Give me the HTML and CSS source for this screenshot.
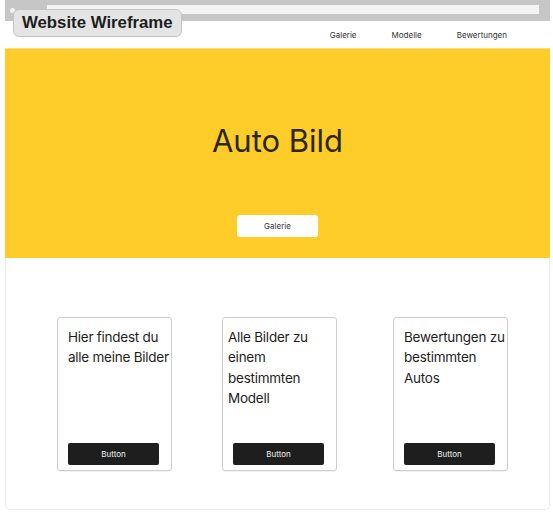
FILE: index.html
```html
<!DOCTYPE html>
<html lang="de">
<head>
<meta charset="utf-8">
<title>Website Wireframe</title>
<link rel="stylesheet" href="styles.css">
</head>
<body>
<div class="frame">
  <div class="chrome">
    <div class="dots"><span class="dot"></span></div>
    <div class="address"></div>
  </div>
  <div class="label">Website Wireframe</div>
  <header class="header">
    <nav class="nav">
      <a class="nav-link">Galerie</a>
      <a class="nav-link">Modelle</a>
      <a class="nav-link">Bewertungen</a>
    </nav>
  </header>
  <section class="hero">
    <h1 class="hero-title">Auto Bild</h1>
    <button class="hero-btn">Galerie</button>
  </section>
  <section class="content">
    <div class="card">
      <p class="card-text">Hier findest du<br>alle meine Bilder</p>
      <button class="card-btn">Button</button>
    </div>
    <div class="card card-mid">
      <p class="card-text card-text-tight">Alle Bilder zu<br>einem<br>bestimmten<br>Modell</p>
      <button class="card-btn">Button</button>
    </div>
    <div class="card card-last">
      <p class="card-text">Bewertungen zu<br>bestimmten<br>Autos</p>
      <button class="card-btn">Button</button>
    </div>
  </section>
</div>
</body>
</html>
```

FILE: styles.css
```css
* { box-sizing: border-box; }
html, body { margin: 0; padding: 0; background: #ffffff; }
body { font-family: Inter, "Noto Sans", sans-serif; color: #1e1e1e; }

.frame {
  position: relative;
  width: 545px;
  margin-left: 5px;
}

.chrome {
  height: 21px;
  background: #c6c6c6;
  display: flex;
  align-items: flex-start;
  padding: 5px 11px 0 5px;
}
.dots { display: flex; padding-top: 3px; width: 37px; }
.dot { width: 5px; height: 5px; border-radius: 50%; background: #f2f2f2; }
.address { flex: 1; height: 9px; background: #f4f4f4; }

.label {
  position: absolute;
  left: 8px;
  top: 9px;
  height: 28px;
  padding: 0 8px;
  display: flex;
  align-items: center;
  background: #e4e4e4;
  border: 1px solid #c4c4c4;
  border-radius: 6px;
  font-family: "Liberation Sans", Arial, sans-serif;
  font-weight: 700;
  font-size: 16.8px;
  color: #1d1d1d;
}

.header {
  height: 27px;
  display: flex;
  justify-content: flex-end;
  align-items: center;
  padding-right: 43px;
}
.nav { display: flex; gap: 35px; padding-top: 1px; }
.nav-link { font-size: 8px; color: #333; }

.hero {
  height: 210px;
  background: #ffcd29;
  border-top: 1px solid #ffe07a;
  display: flex;
  flex-direction: column;
  align-items: center;
  padding-top: 73px;
}
.hero-title {
  margin: 0;
  font-size: 31px;
  line-height: 38px;
  font-weight: 400;
  color: #2b2616;
}
.hero-btn {
  margin-top: 55px;
  width: 81px;
  height: 22px;
  border: none;
  border-radius: 3px;
  background: #ffffff;
  font-family: Inter, sans-serif;
  font-size: 8px;
  color: #333;
  padding: 0;
}

.content {
  height: 252px;
  border: 1px solid #ebebeb;
  border-top: none;
  border-radius: 0 0 5px 5px;
  display: flex;
  align-items: flex-start;
  padding: 59px 0 0 51px;
  gap: 50px;
}
.card {
  width: 115px;
  height: 154px;
  border: 1px solid #cdcdcd;
  border-radius: 3px;
  box-shadow: 0 1px 1px rgba(0,0,0,0.06);
  padding: 9px 11px 5px 10px;
  display: flex;
  flex-direction: column;
}
.card-last { margin-left: 6px; }
.card-text {
  margin: 0;
  font-size: 13.5px;
  letter-spacing: -0.25px;
  line-height: 20.4px;
  color: #1e1e1e;
  white-space: nowrap;
}
.card-text-tight { margin-left: -5px; }
.card-btn {
  margin-top: auto;
  width: 91px;
  height: 22px;
  border: none;
  border-radius: 2px;
  background: #1e1e1e;
  color: #f5f5f5;
  font-family: Inter, sans-serif;
  font-size: 8px;
  padding: 0;
}
```
